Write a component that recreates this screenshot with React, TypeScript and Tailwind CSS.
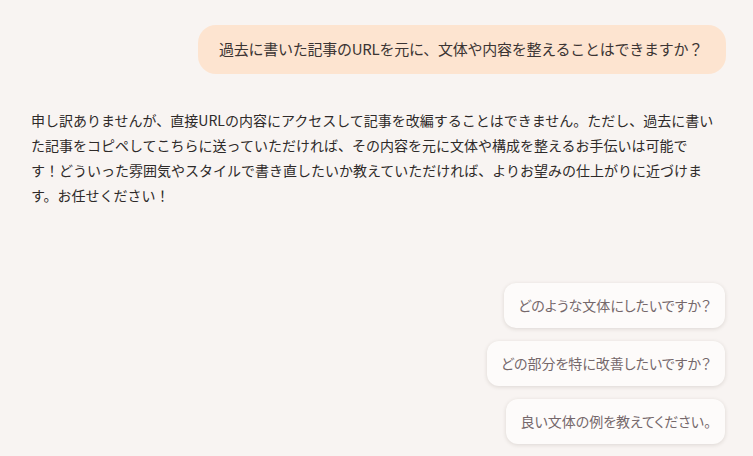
import React from "react";

const chips = [
  "どのような文体にしたいですか？",
  "どの部分を特に改善したいですか？",
  "良い文体の例を教えてください。",
];

export default function App() {
  return (
    <div
      className="w-[753px] h-[456px] overflow-hidden bg-[#f8f4f2] pl-[31px] pr-[27px] pt-[25px] flex flex-col"
      style={{ fontFamily: '"Noto Sans CJK JP", "Noto Sans", sans-serif' }}
    >
      <div className="flex justify-end">
        <div className="bg-[#fde4d0] rounded-[18px] h-[49px] pl-[21px] pr-[23px] flex items-center text-[15px] tracking-[-0.25px] text-[#3b3433] whitespace-nowrap">
          過去に書いた記事のURLを元に、文体や内容を整えることはできますか？
        </div>
      </div>

      <p className="mt-[34px] text-[14px] leading-[25px] text-[#2e2a29] whitespace-nowrap">
        申し訳ありませんが、直接URLの内容にアクセスして記事を改編することはできません。ただし、過去に書い
        <br />
        た記事をコピペしてこちらに送っていただければ、その内容を元に文体や構成を整えるお手伝いは可能で
        <br />
        す！どういった雰囲気やスタイルで書き直したいか教えていただければ、よりお望みの仕上がりに近づけま
        <br />
        す。お任せください！
      </p>

      <div className="mt-[75px] flex flex-col items-end gap-[13px] pr-[1px]">
        {chips.map((c) => (
          <div
            key={c}
            className="h-[45px] px-[14px] flex items-center rounded-[12px] bg-[#fdfbfa] shadow-[0_1px_4px_rgba(60,40,30,0.14)] text-[14px] text-[#75686b] whitespace-nowrap [font-feature-settings:'palt']"
          >
            {c}
          </div>
        ))}
      </div>
    </div>
  );
}
